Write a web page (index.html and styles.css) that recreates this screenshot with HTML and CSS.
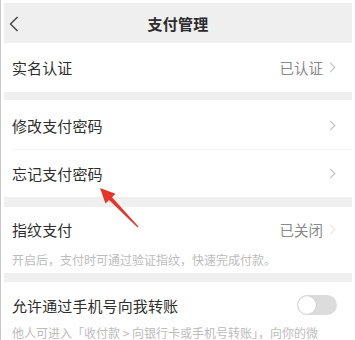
FILE: index.html
```html
<!DOCTYPE html>
<html lang="zh-CN">
<head>
<meta charset="utf-8">
<title>支付管理</title>
<link rel="stylesheet" href="styles.css">
</head>
<body>
<div class="frame">
  <div class="page">
    <header class="nav">
      <svg class="back" width="10" height="16" viewBox="0 0 10 16"><path d="M8.5 1 L1.5 8 L8.5 15" fill="none" stroke="#444" stroke-width="1.4"/></svg>
      <div class="title">支付管理</div>
    </header>

    <div class="row h49">
      <span class="label">实名认证</span>
      <span class="value">已认证</span>
      <span class="chev"></span>
    </div>
    <div class="gap"></div>

    <div class="row h50 divided">
      <span class="label">修改支付密码</span>
      <span class="value"></span>
      <span class="chev"></span>
    </div>
    <div class="row h47">
      <span class="label">忘记支付密码</span>
      <span class="value"></span>
      <span class="chev"></span>
    </div>
    <div class="gap g10"></div>

    <div class="block">
      <div class="row h44">
        <span class="label">指纹支付</span>
        <span class="value">已关闭</span>
        <span class="chev light"></span>
      </div>
      <div class="desc">开启后，支付时可通过验证指纹，快速完成付款。</div>
    </div>
    <div class="gap g9"></div>

    <div class="block">
      <div class="row sw h46">
        <span class="label">允许通过手机号向我转账</span>
        <span class="toggle"><span class="knob"></span></span>
      </div>
      <div class="desc last">他人可进入「收付款 &gt; 向银行卡或手机号转账」，向你的微</div>
    </div>
  </div>

  <svg class="arrow" width="355" height="340" viewBox="0 0 355 340">
    <polygon fill="#e8332b" points="100,188 115.5,193.8 112,197.3 138.4,226.6 137.6,227.4 109,200 105.5,203.6"/>
  </svg>
</div>
</body>
</html>
```

FILE: styles.css
```css
html, body {
  margin: 0;
  padding: 0;
  background: #fff;
}
body {
  font-family: "Noto Sans CJK SC", "Noto Sans", sans-serif;
  color: #333;
  width: 355px;
  height: 340px;
  overflow: hidden;
}
.frame {
  position: relative;
  height: 340px;
  border-left: 1px solid #c8c8c8;
  padding: 3px 3px 0 3px;
  box-sizing: border-box;
}
.page {
  background: #fff;
}
.nav {
  position: relative;
  height: 40px;
  background: #efefef;
  display: flex;
  align-items: center;
  justify-content: center;
}
.back {
  position: absolute;
  left: 5px;
  top: 13px;
}
.title {
  font-size: 15px;
  font-weight: 700;
  color: #2c2c2c;
  letter-spacing: 0.3px;
}
.row {
  display: grid;
  grid-template-columns: 1fr auto 12px;
  align-items: center;
  padding: 0 17px 0 8px;
  position: relative;
}
.row.sw {
  grid-template-columns: 1fr auto;
  padding-right: 15px;
}
.h49 { height: 49px; }
.h50 { height: 50px; }
.h47 { height: 47px; }
.h44 { height: 44px; }
.h46 { height: 46px; }
.divided::after {
  content: "";
  position: absolute;
  left: 8px;
  right: 0;
  bottom: 0;
  height: 1px;
  background: #f3f3f3;
}
.label {
  font-size: 15px;
  color: #2e2e2e;
  letter-spacing: 0.1px;
}
.value {
  font-size: 14.5px;
  color: #8a8a8a;
}
.chev {
  justify-self: end;
  width: 6px;
  height: 6px;
  border-top: 1.2px solid #bdbdbd;
  border-right: 1.2px solid #bdbdbd;
  transform: rotate(45deg);
  margin-right: 1px;
}
.chev.light {
  border-color: #e6e6e6;
}
.gap {
  height: 8px;
  background: #efefef;
}
.gap.g10 { height: 10px; }
.gap.g9 { height: 9px; }
.desc {
  font-size: 12px;
  color: #bcbcbc;
  padding: 0 8px 4px;
  line-height: 18px;
  white-space: nowrap;
  overflow: hidden;
}
.desc.last {
  margin-top: -4px;
}
.toggle {
  width: 40px;
  height: 20px;
  border-radius: 10px;
  background: #dcdcdc;
  position: relative;
}
.knob {
  position: absolute;
  left: 1px;
  top: 1px;
  width: 18px;
  height: 18px;
  border-radius: 50%;
  background: #fff;
  box-shadow: 0 0 1px rgba(0,0,0,0.25);
}
.arrow {
  position: absolute;
  left: -1px;
  top: 0;
  pointer-events: none;
}
```
